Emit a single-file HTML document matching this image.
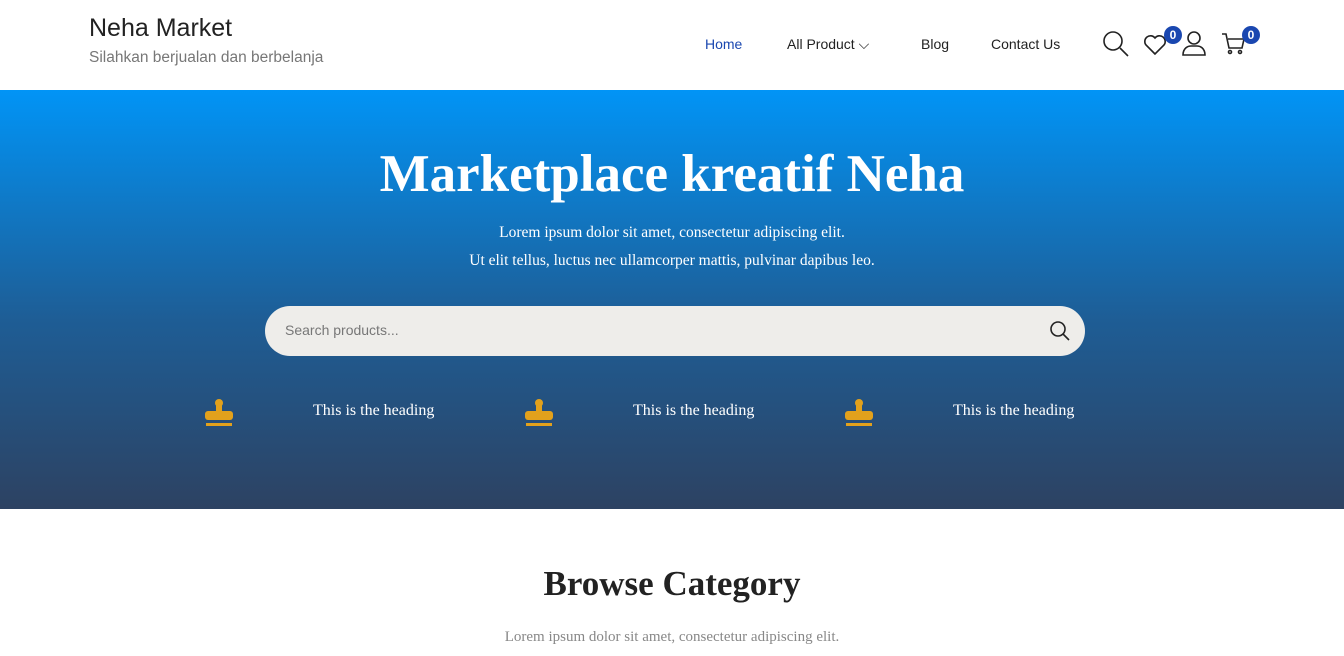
<!DOCTYPE html>
<html><head><meta charset="utf-8"><style>
*{margin:0;padding:0;box-sizing:border-box}
body{width:1344px;height:656px;overflow:hidden;background:#fff;font-family:"Liberation Sans",sans-serif}
.hdr{height:90px;position:relative}
.logo{position:absolute;left:89px;top:14px;font-size:25px;color:#222}
.tag{position:absolute;left:89px;top:49px;font-size:15.5px;color:#777}
.nav a{position:absolute;top:36px;font-size:14px;color:#222;text-decoration:none}
.hero{position:absolute;top:90px;left:0;width:1344px;height:419px;background:linear-gradient(#0194f6,#1e5d95 55%,#2d4262);color:#fff;text-align:center;font-family:"Liberation Serif",serif}
.hero h1{position:absolute;top:54px;width:100%;font-size:53px;font-weight:bold}
.hero p{position:absolute;width:100%;font-size:15.5px}
.search{position:absolute;left:265px;top:216px;width:820px;height:50px;border-radius:25px;background:#eeedea;text-align:left;color:#777;font-family:"Liberation Sans",sans-serif;font-size:14px;padding:16px 20px}
.feat{position:absolute;top:312px;font-size:16px}
.stamp{position:absolute;top:308px}
.badge{position:absolute;width:18px;height:18px;border-radius:9px;background:#1a47b0;color:#fff;font-size:12px;font-weight:bold;text-align:center;line-height:18px}
</style></head><body>
<div class="hdr">
<div class="logo">Neha Market</div>
<div class="tag">Silahkan berjualan dan berbelanja</div>
<div class="nav"><a style="left:705px;color:#1a47b0">Home</a><a style="left:787px">All Product ⌵</a><a style="left:921px">Blog</a><a style="left:991px">Contact Us</a></div>
<svg style="position:absolute;left:1100px;top:28px" width="170" height="32" fill="none" stroke="#222" stroke-width="1.6">
<circle cx="13" cy="13" r="9"/><path d="M20 20l8 8"/>
<path d="M55 26l-9-9a5 5 0 0 1 9-7a5 5 0 0 1 9 7z"/>
<circle cx="94" cy="10" r="6"/><path d="M83 27c0-7 5-9 8-9h6c3 0 8 2 8 9z"/>
<path d="M122 6h4l3 14h13l2-9h-16"/><circle cx="130" cy="24" r="1.5"/><circle cx="140" cy="24" r="1.5"/>
</svg>
<div class="badge" style="left:1164px;top:26px">0</div>
<div class="badge" style="left:1242px;top:26px">0</div>
</div>
<div class="hero">
<h1>Marketplace kreatif Neha</h1>
<p style="top:134px">Lorem ipsum dolor sit amet, consectetur adipiscing elit.</p>
<p style="top:162px">Ut elit tellus, luctus nec ullamcorper mattis, pulvinar dapibus leo.</p>
<div class="search">Search products...<svg style="position:absolute;right:14px;top:14px" width="22" height="22" fill="none" stroke="#222" stroke-width="1.6"><circle cx="9" cy="9" r="7"/><path d="M14 14l6 6"/></svg></div>
<svg class="stamp" style="left:204px" width="30" height="30" fill="#e2a11c"><circle cx="15" cy="5" r="4"/><rect x="12" y="6" width="6" height="8"/><rect x="1" y="13" width="28" height="9" rx="3"/><rect x="2" y="25" width="26" height="3"/></svg>
<svg class="stamp" style="left:524px" width="30" height="30" fill="#e2a11c"><circle cx="15" cy="5" r="4"/><rect x="12" y="6" width="6" height="8"/><rect x="1" y="13" width="28" height="9" rx="3"/><rect x="2" y="25" width="26" height="3"/></svg>
<svg class="stamp" style="left:844px" width="30" height="30" fill="#e2a11c"><circle cx="15" cy="5" r="4"/><rect x="12" y="6" width="6" height="8"/><rect x="1" y="13" width="28" height="9" rx="3"/><rect x="2" y="25" width="26" height="3"/></svg>
<div class="feat" style="left:313px">This is the heading</div>
<div class="feat" style="left:633px">This is the heading</div>
<div class="feat" style="left:953px">This is the heading</div>
</div>
<div style="position:absolute;top:564px;width:100%;text-align:center;font-family:'Liberation Serif',serif;font-size:35px;font-weight:bold;color:#222">Browse Category</div>
<div style="position:absolute;top:629px;width:100%;text-align:center;font-family:'Liberation Serif',serif;font-size:15px;color:#888">Lorem ipsum dolor sit amet, consectetur adipiscing elit.</div>
</body></html>
